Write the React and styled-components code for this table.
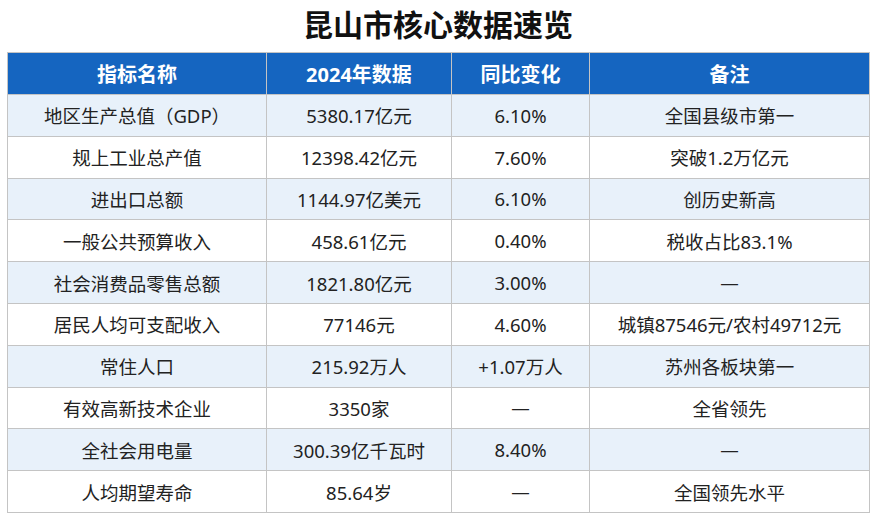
import React from 'react';
import styled, { createGlobalStyle } from 'styled-components';

const rows = [
  ['地区生产总值（GDP）', '5380.17亿元', '6.10%', '全国县级市第一'],
  ['规上工业总产值', '12398.42亿元', '7.60%', '突破1.2万亿元'],
  ['进出口总额', '1144.97亿美元', '6.10%', '创历史新高'],
  ['一般公共预算收入', '458.61亿元', '0.40%', '税收占比83.1%'],
  ['社会消费品零售总额', '1821.80亿元', '3.00%', '—'],
  ['居民人均可支配收入', '77146元', '4.60%', '城镇87546元/农村49712元'],
  ['常住人口', '215.92万人', '+1.07万人', '苏州各板块第一'],
  ['有效高新技术企业', '3350家', '—', '全省领先'],
  ['全社会用电量', '300.39亿千瓦时', '8.40%', '—'],
  ['人均期望寿命', '85.64岁', '—', '全国领先水平'],
];

const headers = ['指标名称', '2024年数据', '同比变化', '备注'];
const widths = [259, 185, 138, 280];

const GlobalStyle = createGlobalStyle`
  html, body {
    margin: 0;
    padding: 0;
    background: #fff;
    font-family: "Noto Sans", "Noto Sans CJK SC", sans-serif;
  }
`;

const Page = styled.div`
  width: 877px;
  height: 520px;
  padding: 0 8px 0 7px;
  box-sizing: border-box;
`;

const Title = styled.h1`
  margin: 0;
  height: 52px;
  display: flex;
  align-items: center;
  justify-content: center;
  font-size: 30px;
  font-weight: 700;
  color: #111;
  padding-bottom: 6px;
  box-sizing: border-box;
`;

const Table = styled.table`
  width: 862px;
  border-collapse: collapse;
  table-layout: fixed;
  font-size: 18.5px;
  color: #222;
`;

const HeadCell = styled.th`
  background: #1565c0;
  color: #fff;
  font-weight: 700;
  font-size: 20px;
  height: 41px;
  padding: 0;
  text-align: center;
  border: 1px solid #c4c4c4;
`;

const Row = styled.tr`
  background: ${p => (p.$alt ? '#e8f1fa' : '#fff')};
`;

const Cell = styled.td`
  height: 40.8px;
  padding: 0;
  text-align: center;
  border: 1px solid #c4c4c4;
`;

export default function App() {
  return (
    <Page>
      <GlobalStyle />
      <Title>昆山市核心数据速览</Title>
      <Table>
        <colgroup>
          {widths.map((w, i) => (
            <col key={i} style={{ width: w }} />
          ))}
        </colgroup>
        <thead>
          <tr>
            {headers.map(h => (
              <HeadCell key={h}>{h}</HeadCell>
            ))}
          </tr>
        </thead>
        <tbody>
          {rows.map((r, i) => (
            <Row key={i} $alt={i % 2 === 0}>
              {r.map((c, j) => (
                <Cell key={j}>{c}</Cell>
              ))}
            </Row>
          ))}
        </tbody>
      </Table>
    </Page>
  );
}
